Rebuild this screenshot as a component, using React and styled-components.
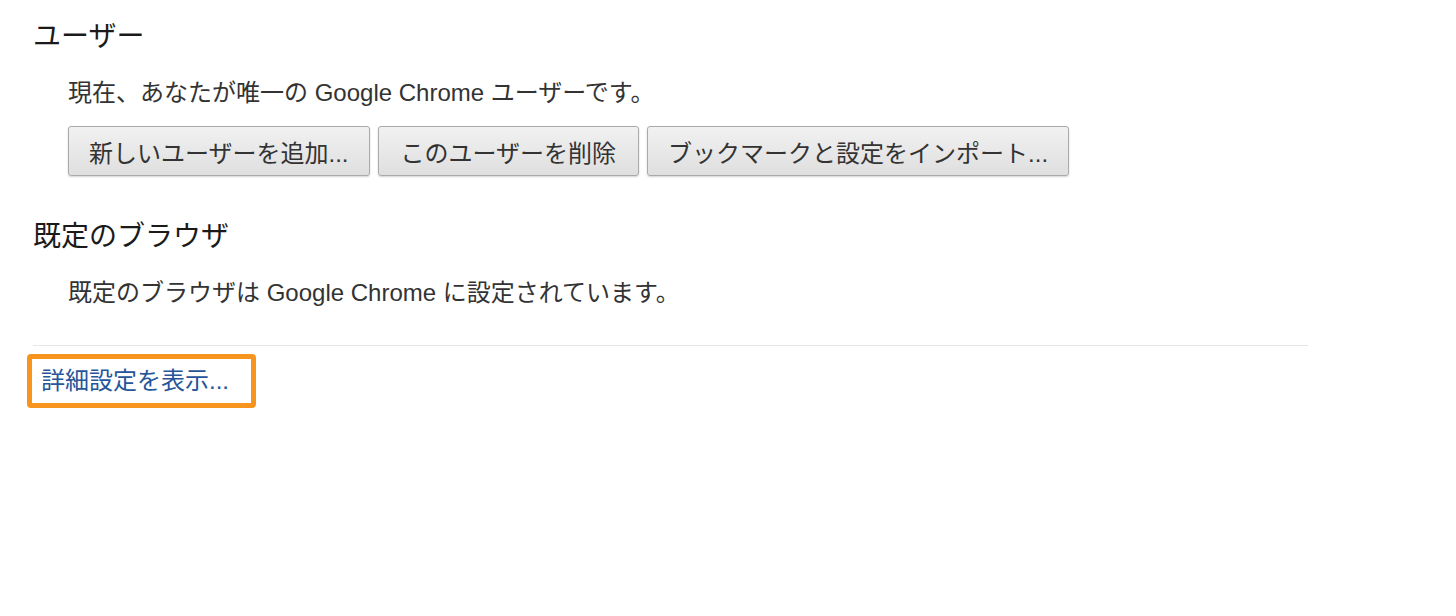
import styled, { createGlobalStyle } from "styled-components"

const GlobalStyle = createGlobalStyle`
  body {
    margin: 0;
    background: #fff;
    font-family: "Liberation Sans", "Noto Sans CJK JP", sans-serif;
  }
`

const Page = styled.div`
  padding: 22px 0 0 33px;
  width: 1275px;
`

const Section = styled.section`
  margin-bottom: ${props => props.$gap || 0}px;
`

const SectionTitle = styled.h3`
  margin: 0 0 26px;
  font-size: 28px;
  line-height: 30px;
  font-weight: normal;
  color: #1a1a1a;
`

const SectionBody = styled.div`
  padding-left: 35px;
`

const Text = styled.p`
  margin: 0;
  font-size: 24px;
  line-height: 30px;
  color: #333;
`

const ButtonRow = styled.div`
  display: flex;
  gap: 8px;
  margin-top: 18px;
`

const Button = styled.button`
  height: 50px;
  padding: 0 ${props => props.$pad || 20}px;
  font-family: inherit;
  font-size: 24px;
  color: #333;
  background: linear-gradient(#f1f1f1, #dfdfdf);
  border: 1px solid #aaa;
  border-radius: 3px;
  box-shadow: 0 1px 2px rgba(0, 0, 0, 0.18);
  white-space: nowrap;
`

const Divider = styled.hr`
  margin: 0;
  border: 0;
  border-top: 1px solid #e6e6e6;
`

const Footer = styled.div`
  padding-top: 8px;
  margin-left: -6px;
`

const AdvancedLink = styled.a`
  display: inline-block;
  padding: 7px 22px 7px 9px;
  font-size: 24px;
  line-height: 30px;
  color: #265599;
  text-decoration: none;
  border: 5px solid #f7941d;
  border-radius: 4px;
`

function App () {
  return (
    <>
      <GlobalStyle />
      <Page>
        <Section $gap={46}>
          <SectionTitle>ユーザー</SectionTitle>
          <SectionBody>
            <Text>現在、あなたが唯一の Google Chrome ユーザーです。</Text>
            <ButtonRow>
              <Button>新しいユーザーを追加...</Button>
              <Button $pad={22}>このユーザーを削除</Button>
              <Button>ブックマークと設定をインポート...</Button>
            </ButtonRow>
          </SectionBody>
        </Section>
        <Section $gap={37}>
          <SectionTitle>既定のブラウザ</SectionTitle>
          <SectionBody>
            <Text>既定のブラウザは Google Chrome に設定されています。</Text>
          </SectionBody>
        </Section>
        <Divider />
        <Footer>
          <AdvancedLink href="#">詳細設定を表示...</AdvancedLink>
        </Footer>
      </Page>
    </>
  )
}

export default App
